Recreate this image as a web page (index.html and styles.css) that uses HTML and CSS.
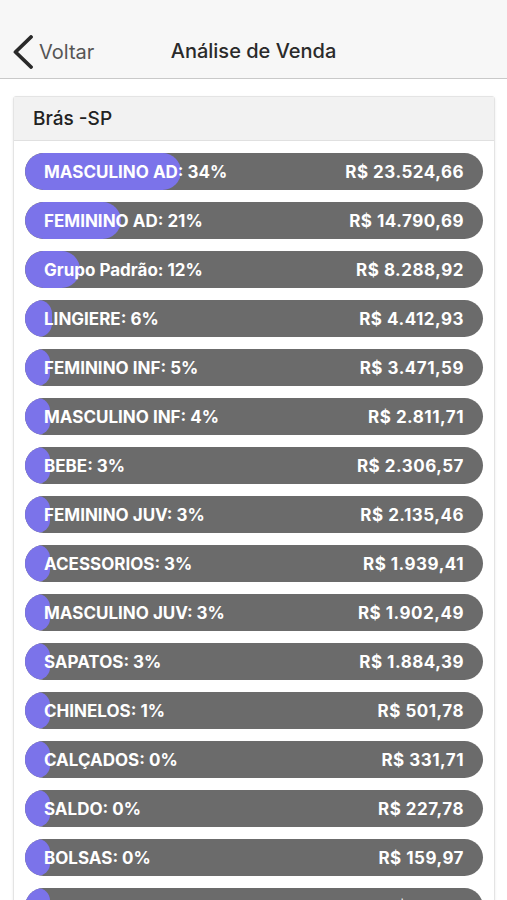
FILE: index.html
```html
<!doctype html>
<html lang="pt-BR">
  <head>
    <meta charset="UTF-8" />
    <meta name="viewport" content="width=device-width, initial-scale=1.0" />
    <title>Análise de Venda</title>
    <link rel="stylesheet" href="styles.css">
  </head>
  <body>
    <header class="navbar">
      <a class="back" href="#">
        <svg class="back-icon" width="20" height="34" viewBox="0 0 20 34" fill="none"
          stroke="currentColor" stroke-width="3.8" stroke-linecap="round" stroke-linejoin="round">
          <polyline points="18,2 2.5,17 18,32"></polyline>
        </svg>
        <span>Voltar</span>
      </a>
      <h1 class="title">Análise de Venda</h1>
    </header>

    <main class="content">
      <section class="card">
        <div class="card-header">Brás -SP</div>
        <div class="card-body">
          <div class="bar"><div class="fill" style="width: 34%"></div><span class="label">MASCULINO AD: 34%</span><span class="value">R$ 23.524,66</span></div>
          <div class="bar"><div class="fill" style="width: 21%"></div><span class="label">FEMININO AD: 21%</span><span class="value">R$ 14.790,69</span></div>
          <div class="bar"><div class="fill" style="width: 12%"></div><span class="label">Grupo Padrão: 12%</span><span class="value">R$ 8.288,92</span></div>
          <div class="bar"><div class="fill" style="width: 6%"></div><span class="label">LINGIERE: 6%</span><span class="value">R$ 4.412,93</span></div>
          <div class="bar"><div class="fill" style="width: 5%"></div><span class="label">FEMININO INF: 5%</span><span class="value">R$ 3.471,59</span></div>
          <div class="bar"><div class="fill" style="width: 4%"></div><span class="label">MASCULINO INF: 4%</span><span class="value">R$ 2.811,71</span></div>
          <div class="bar"><div class="fill" style="width: 3%"></div><span class="label">BEBE: 3%</span><span class="value">R$ 2.306,57</span></div>
          <div class="bar"><div class="fill" style="width: 3%"></div><span class="label">FEMININO JUV: 3%</span><span class="value">R$ 2.135,46</span></div>
          <div class="bar"><div class="fill" style="width: 3%"></div><span class="label">ACESSORIOS: 3%</span><span class="value">R$ 1.939,41</span></div>
          <div class="bar"><div class="fill" style="width: 3%"></div><span class="label">MASCULINO JUV: 3%</span><span class="value">R$ 1.902,49</span></div>
          <div class="bar"><div class="fill" style="width: 3%"></div><span class="label">SAPATOS: 3%</span><span class="value">R$ 1.884,39</span></div>
          <div class="bar"><div class="fill" style="width: 1%"></div><span class="label">CHINELOS: 1%</span><span class="value">R$ 501,78</span></div>
          <div class="bar"><div class="fill" style="width: 0%"></div><span class="label">CALÇADOS: 0%</span><span class="value">R$ 331,71</span></div>
          <div class="bar"><div class="fill" style="width: 0%"></div><span class="label">SALDO: 0%</span><span class="value">R$ 227,78</span></div>
          <div class="bar"><div class="fill" style="width: 0%"></div><span class="label">BOLSAS: 0%</span><span class="value">R$ 159,97</span></div>
          <div class="bar"><div class="fill" style="width: 0%"></div><span class="label">PIJIA: 0%</span><span class="value">R$ 117,78</span></div>
        </div>
      </section>
    </main>
  </body>
</html>
```

FILE: styles.css
```css
* {
  margin: 0;
  padding: 0;
  box-sizing: border-box;
}

html,
body {
  font-family: Inter, "Liberation Sans", sans-serif;
  background-color: #ffffff;
  color: #222222;
}

body {
  width: 507px;
  height: 900px;
  overflow: hidden;
}

.navbar {
  display: flex;
  align-items: center;
  height: 79px;
  padding-top: 26px;
  background-color: #f7f7f7;
  border-bottom: 1px solid #c9c9c9;
  position: relative;
}

.back {
  display: flex;
  align-items: center;
  gap: 6px;
  padding-left: 13px;
  color: #222222;
  text-decoration: none;
  font-size: 20px;
}

.back span {
  color: #555555;
}

.back-icon {
  color: #2a2a2a;
}

.title {
  position: absolute;
  left: 0;
  right: 0;
  bottom: 15px;
  text-align: center;
  font-size: 20px;
  font-weight: 500;
  color: #2a2a2a;
  pointer-events: none;
}

.content {
  padding: 17px 12px 0 13px;
}

.card {
  border: 1px solid #e4e4e4;
  border-radius: 3px;
  box-shadow: 0 1px 3px rgba(0, 0, 0, 0.08);
  background-color: #ffffff;
}

.card-header {
  height: 44px;
  display: flex;
  align-items: center;
  padding-left: 19px;
  background-color: #f2f2f2;
  border-bottom: 1px solid #e0e0e0;
  font-size: 19px;
  font-weight: 500;
  color: #222222;
}

.card-body {
  display: flex;
  flex-direction: column;
  gap: 12px;
  padding: 12px 11px 12px 11px;
}

.bar {
  position: relative;
  display: flex;
  align-items: center;
  justify-content: space-between;
  height: 37px;
  padding: 0 19px 0 19px;
  border-radius: 19px;
  background-color: #6b6b6b;
  color: #ffffff;
  font-size: 17px;
  font-weight: 700;
  overflow: hidden;
}

.fill {
  position: absolute;
  left: 0;
  top: 0;
  bottom: 0;
  min-width: 25px;
  border-radius: 19px;
  background-color: #7b73ea;
}

.label,
.value {
  position: relative;
}

.value {
  letter-spacing: 0.5px;
}
```
